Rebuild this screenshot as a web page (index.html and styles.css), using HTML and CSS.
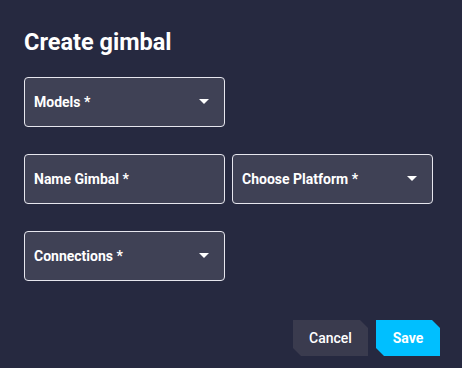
FILE: index.html
```html
<!DOCTYPE html>
<html lang="en">
<head>
    <meta charset="UTF-8">
    <meta name="viewport" content="width=device-width, initial-scale=1.0">
    <title>Create gimbal</title>
    <link rel="stylesheet" href="styles.css">
</head>
<body>

    <div class="dialog">
        <h1 class="dialog-title">Create gimbal</h1>

        <!-- Form fields -->
        <div class="form-grid">
            <div class="field select">
                <span>Models *</span>
                <span class="arrow"></span>
            </div>
            <div class="empty"></div>

            <div class="field">
                <span>Name Gimbal *</span>
            </div>
            <div class="field select">
                <span>Choose Platform *</span>
                <span class="arrow"></span>
            </div>

            <div class="field select">
                <span>Connections *</span>
                <span class="arrow"></span>
            </div>
            <div class="empty"></div>
        </div>

        <div class="actions">
            <button class="btn btn-cancel">Cancel</button>
            <button class="btn btn-save">Save</button>
        </div>
    </div>

</body>
</html>
```

FILE: styles.css
```css
body {
    margin: 0;
    background: #262940;
    font-family: Roboto, 'Liberation Sans', sans-serif;
    color: #fff;
}

.dialog {
    width: 462px;
    height: 368px;
    box-sizing: border-box;
    padding: 29px 22px 0 24px;
}

.dialog-title {
    margin: 0;
    font-size: 23.5px;
    line-height: 26px;
    font-weight: 700;
}

.form-grid {
    display: grid;
    grid-template-columns: 201px 201px;
    column-gap: 7px;
    row-gap: 27px;
    margin-top: 22px;
}

.field {
    height: 50px;
    box-sizing: border-box;
    border: 1px solid #e6e6ee;
    border-radius: 4px;
    background: #3f4155;
    display: flex;
    align-items: center;
    justify-content: space-between;
    padding: 0 15px 0 9px;
    font-size: 14px;
    font-weight: 700;
}

.arrow {
    width: 0;
    height: 0;
    border-left: 5px solid transparent;
    border-right: 5px solid transparent;
    border-top: 5px solid #fff;
    margin-top: -1px;
}

.actions {
    display: flex;
    justify-content: flex-end;
    gap: 8px;
    margin-top: 39px;
}

.btn {
    height: 36px;
    border: none;
    font-family: inherit;
    font-size: 14px;
    font-weight: 500;
    color: #fff;
    cursor: pointer;
    clip-path: polygon(0 0, calc(100% - 8px) 0, 100% 8px, 100% 100%, 8px 100%, 0 calc(100% - 8px));
}

.btn-cancel {
    width: 75px;
    background: #3a3b4e;
}

.btn-save {
    width: 64px;
    background: #00bfff;
    font-weight: 700;
}
```
